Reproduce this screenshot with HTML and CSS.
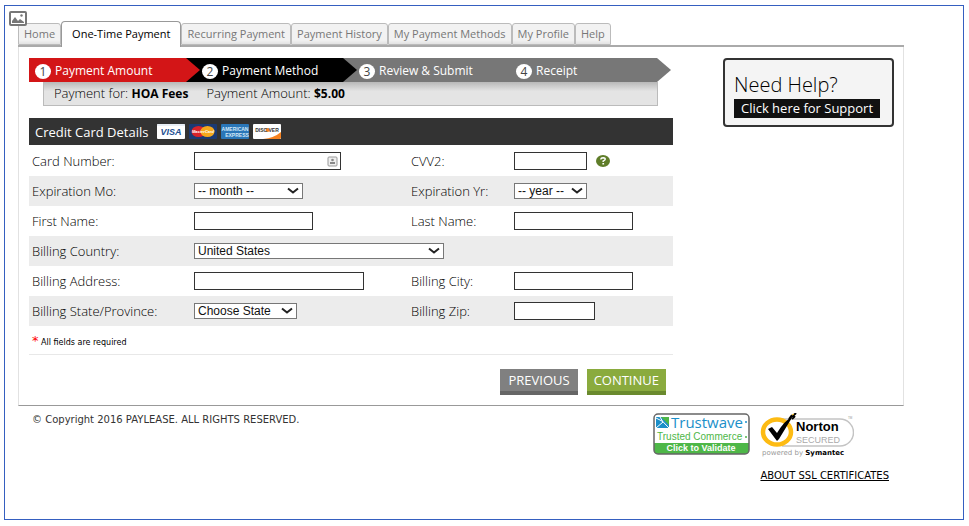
FILE: index.html
```html
<!DOCTYPE html>
<html lang="en">
    <head>
        <meta charset="UTF-8">
        <title>One-Time Payment</title>
        <link rel="stylesheet" href="styles.css">
    </head>
    <body>
        <div class="page">
            <svg class="logo" width="18" height="15" viewBox="0 0 18 15">
                <rect x="1" y="1" width="16" height="13" rx="1" fill="#fff" stroke="#777" stroke-width="2"/>
                <path d="M3 12v-2l3-4 3 4 2-2 4 3v1z" fill="#777"/>
                <circle cx="12.500" cy="4.500" r="1.200" fill="#777"/>
            </svg>

            <nav class="tabs">
                <a href="#">Home</a>
                <a href="#" class="current">One-Time Payment</a>
                <a href="#">Recurring Payment</a>
                <a href="#">Payment History</a>
                <a href="#">My Payment Methods</a>
                <a href="#">My Profile</a>
                <a href="#">Help</a>
            </nav>

            <div class="panel">
                <div class="main">
                    <ol class="steps">
                        <li class="done"><span class="num">1</span>Payment Amount</li>
                        <li class="active"><span class="num">2</span>Payment Method</li>
                        <li><span class="num">3</span>Review &amp; Submit</li>
                        <li><span class="num">4</span>Receipt</li>
                    </ol>
                    <div class="summary">
                        <span>Payment for: <b>HOA Fees</b></span>
                        <span>Payment Amount: <b>$5.00</b></span>
                    </div>

                    <form action="#" method="post">
                        <div class="card_head">
                            <h2>Credit Card Details</h2>
                            <svg width="28" height="15" viewBox="0 0 28 15">
                                <rect width="28" height="15" rx="1" fill="#fff"/>
                                <path d="M1 0h26l1 1v1H0V1z" fill="#e8eef5"/>
                                <text x="14" y="11" class="visa">VISA</text>
                            </svg>
                            <svg width="28" height="15" viewBox="0 0 28 15">
                                <rect width="28" height="15" rx="1" fill="#1b3a74"/>
                                <ellipse cx="9.500" cy="7.500" rx="7" ry="5.500" fill="#d8232a"/>
                                <ellipse cx="18.500" cy="7.500" rx="7" ry="5.500" fill="#f5a81c"/>
                                <text x="14" y="9" class="mastercard">MasterCard</text>
                            </svg>
                            <svg width="28" height="15" viewBox="0 0 28 15">
                                <rect width="28" height="15" rx="1" fill="#2a76b8"/>
                                <text x="14" y="7" class="amex">AMERICAN</text>
                                <text x="16" y="13" class="amex">EXPRESS</text>
                            </svg>
                            <svg width="28" height="15" viewBox="0 0 28 15">
                                <rect width="28" height="15" rx="1" fill="#fff"/>
                                <path d="M28 8v6l-1 1H10q11-1 18-7z" fill="#f58220"/>
                                <circle cx="14.500" cy="6" r="2" fill="#f58220"/>
                                <text x="14" y="8" class="discover">DISC VER</text>
                            </svg>
                        </div>

                        <div class="row">
                            <label for="card">Card Number:</label>
                            <div class="card_box">
                                <input type="text" id="card" class="w_card">
                                <svg class="fill_icon" width="11" height="11" viewBox="0 0 11 11">
                                    <rect x="1" y="1" width="9" height="9" rx="1" fill="#eee" stroke="#999"/>
                                    <circle cx="5.500" cy="4" r="1.300" fill="#888"/>
                                    <path d="M3 8V6h5v2z" fill="#888"/>
                                </svg>
                            </div>
                            <label for="cvv">CVV2:</label>
                            <div class="cvv_box">
                                <input type="text" id="cvv" class="w_cvv">
                                <svg width="14" height="12" viewBox="0 0 14 12">
                                    <ellipse cx="7" cy="6" rx="7" ry="6" fill="#5f7d29"/>
                                    <path d="M4.800 4.500Q5 2.700 7.200 2.700Q9.300 2.800 9.200 4.300Q9.100 5.300 7.200 6.100V7" fill="none" stroke="#fff" stroke-width="1.500"/>
                                    <rect x="6.400" y="8" width="1.700" height="1.500" fill="#fff"/>
                                </svg>
                            </div>
                        </div>
                        <div class="row">
                            <label for="month">Expiration Mo:</label>
                            <div><select id="month" class="w_month"><option>-- month --</option></select></div>
                            <label for="year">Expiration Yr:</label>
                            <div><select id="year" class="w_cvv"><option>-- year --</option></select></div>
                        </div>
                        <div class="row">
                            <label for="first">First Name:</label>
                            <div><input type="text" id="first" class="w_name"></div>
                            <label for="last">Last Name:</label>
                            <div><input type="text" id="last" class="w_name"></div>
                        </div>
                        <div class="row">
                            <label for="country">Billing Country:</label>
                            <div class="wide"><select id="country" class="w_country"><option>United States</option></select></div>
                        </div>
                        <div class="row">
                            <label for="address">Billing Address:</label>
                            <div><input type="text" id="address" class="w_address"></div>
                            <label for="city">Billing City:</label>
                            <div><input type="text" id="city" class="w_name"></div>
                        </div>
                        <div class="row">
                            <label for="state">Billing State/Province:</label>
                            <div><select id="state" class="w_state"><option>Choose State</option></select></div>
                            <label for="zip">Billing Zip:</label>
                            <div><input type="text" id="zip" class="w_zip"></div>
                        </div>
                        <p class="required"><span class="star">*</span> All fields are required</p>

                        <div class="buttons">
                            <button type="button">PREVIOUS</button>
                            <button type="submit" class="go">CONTINUE</button>
                        </div>
                    </form>
                </div>

                <div class="help">
                    <h3>Need Help?</h3>
                    <a href="#">Click here for Support</a>
                </div>
            </div>

            <div class="footer">
                <p>© Copyright 2016 PAYLEASE. ALL RIGHTS RESERVED.</p>
                <svg class="trustwave" width="97" height="42" viewBox="0 0 97 42">
                    <rect x="1" y="1" width="95" height="40" rx="4" fill="#fff"/>
                    <path d="M1 30h95v7q0 4-4 4H5q-4 0-4-4z" fill="#4eb748"/>
                    <rect x="1" y="1" width="95" height="40" rx="4" fill="none" stroke="#666" stroke-width="1.500"/>
                    <path d="M3 4h13v11H3z" fill="#1b8fc9"/>
                    <path d="M8 4h8v8z" fill="#4eb748"/>
                    <path d="M3 5q7 2 13 10M3 15l7-6M7 4l3 5" fill="none" stroke="#fff" stroke-width="1"/>
                    <text x="18" y="15" class="tw_name">Trustwave</text>
                    <circle cx="93" cy="9" r="1" fill="#1b8fc9"/>
                    <text x="4" y="27" class="tw_sub">Trusted Commerce</text>
                    <circle cx="93" cy="24" r="1" fill="#4eb748"/>
                    <text x="48" y="38" class="tw_click">Click to Validate</text>
                </svg>
                <div class="norton_box">
                    <svg width="94" height="44" viewBox="0 0 94 44">
                        <path d="M22 6h58a13 13 0 0 1 0 27H22" fill="#fff" stroke="#c4c4c4" stroke-width="1.500"/>
                        <ellipse cx="17" cy="19" rx="14" ry="12.500" fill="#fff" stroke="#fdbb13" stroke-width="4.500"/>
                        <path d="M8 16l4-2 5 6Q24 8 33 3L19 26l-2 2z" fill="#000"/>
                        <path d="M29 6l3-4M32 4l4-4M32 6l3-3" stroke="#000" stroke-width="2"/>
                        <path d="M32 2l2-1" stroke="#fdbb13" stroke-width="1"/>
                        <text x="36" y="18" class="nt_name">Norton</text>
                        <text x="36" y="30" class="nt_sub">SECURED</text>
                        <text x="88" y="6" class="nt_tm">TM</text>
                        <text x="2" y="42" class="nt_by">powered by <tspan class="nt_sym">Symantec</tspan></text>
                    </svg>
                    <a href="#">ABOUT SSL CERTIFICATES</a>
                </div>
            </div>
        </div>
    </body>
</html>
```

FILE: styles.css
```css
* {
    margin: 0;
    padding: 0;
    box-sizing: border-box;
}

body {
    font-family: "Open Sans", "Noto Sans", sans-serif;
    font-size: 12px;
    line-height: 16px;
    color: #333;
    background: #fff;
}

.page {
    min-height: calc(100vh - 11px);
    margin: 5px 5px 0 4px;
    padding: 5px 59px 0 13px;
    border: 1px solid #355fc0;
}

/* the logo hangs over the left edge of the tabs */
.logo {
    display: block;
    position: relative;
    left: -9px;
    z-index: 2;
}

/* tabs */
.tabs {
    display: flex;
    align-items: flex-end;
    margin-top: -5px;
    border-bottom: 2px solid #aaa;
}

.tabs a {
    height: 22px;
    padding: 2px 5px 0;
    border: 1px solid #bbb;
    border-radius: 3px 3px 0 0;
    background: linear-gradient(#f2f2f2 80%, #e2e2e2);
    color: #777;
    font-size: 11px;
    text-decoration: none;
    white-space: nowrap;
}

.tabs .current {
    height: 26px;
    margin-bottom: -2px;
    padding: 4px 10px 0;
    border-color: #999;
    border-bottom: none;
    border-radius: 4px 4px 0 0;
    background: #fff;
    color: #000;
}

/* panel */
.panel {
    display: flex;
    align-items: flex-start;
    gap: 50px;
    padding: 11px 9px 10px 10px;
    border: 1px solid #e2e2e2;
    border-top: none;
    border-bottom-color: #999;
}

.main {
    flex: 1;
}

/* steps */
.steps {
    display: flex;
    margin-right: 2px;
    list-style: none;
    background: #777;
    color: #fff;
    clip-path: polygon(0 0, calc(100% - 14px) 0, 100% 50%, calc(100% - 14px) 100%, 0 100%);
}

.steps li {
    flex: 1 1 25%;
    display: flex;
    align-items: center;
    gap: 4px;
    height: 24px;
    margin-left: -14px;
    padding: 2px 0 0 16px;
    white-space: nowrap;
}

.steps .done,
.steps .active {
    clip-path: polygon(0 0, calc(100% - 14px) 0, 100% 50%, calc(100% - 14px) 100%, 0 100%);
}

/* the first step lies over the second, so that its tip shows */
.steps .done {
    z-index: 1;
    margin-left: 0;
    padding-left: 6px;
    background: #d31517;
}

.steps .active {
    background: #000;
}

.num {
    width: 16px;
    height: 15px;
    border-radius: 50%;
    background: #fff;
    color: #444;
    line-height: 15px;
    text-align: center;
}

.summary {
    display: flex;
    gap: 18px;
    height: 24px;
    margin: 0 15px 12px 14px;
    padding: 3px 10px 0;
    border: 1px solid #bbb;
    border-top: none;
    background: linear-gradient(#b8b8b8, #e4e4e4 40%);
    color: #000;
    font-size: 13px;
    font-weight: 300;
}

.summary b {
    font-size: 12px;
    font-weight: 700;
}

/* form */
.card_head {
    display: flex;
    align-items: center;
    gap: 4px;
    height: 27px;
    margin-bottom: 1px;
    padding-left: 6px;
    background: #333;
}

.card_head h2 {
    margin-right: 5px;
    color: #fff;
    font-size: 13px;
    font-weight: normal;
}

.card_head text {
    font-family: "Liberation Sans", Arial, sans-serif;
    font-weight: bold;
    text-anchor: middle;
}

.card_head .visa {
    fill: #1d4f91;
    font-size: 9px;
    font-style: italic;
}

.card_head .mastercard {
    fill: #fff;
    font-size: 4px;
    font-style: italic;
}

.card_head .amex {
    fill: #d5e8f7;
    font-size: 5px;
}

.card_head .discover {
    fill: #333;
    font-size: 5px;
}

.row {
    display: grid;
    grid-template-columns: 162fr 217fr 103fr 159fr;
    align-items: center;
    height: 30px;
    padding-left: 3px;
}

.row:nth-child(odd) {
    background: #ececec;
}

.row label {
    color: #000;
    font-size: 13px;
    font-weight: 300;
}

.row > div {
    display: flex;
    align-items: center;
}

.row .wide {
    grid-column: 2 / 5;
}

input,
select {
    height: 18px;
    border: 1px solid #333;
    background: #fff;
    font-family: "Liberation Sans", Arial, sans-serif;
    font-size: 12px;
}

select {
    height: 16px;
    padding: 0 18px 0 3px;
    border-color: #777;
    border-radius: 0;
    appearance: none;
    color: #111;
    background: #fff url("data:image/svg+xml,%3Csvg xmlns='http://www.w3.org/2000/svg' width='12' height='8'%3E%3Cpath d='M1 1.500l5 4 5-4' fill='none' stroke='%23222' stroke-width='2'/%3E%3C/svg%3E") no-repeat right 3px center;
}

.w_card {
    width: 147px;
}

.w_cvv {
    width: 73px;
}

.w_month {
    width: 109px;
}

.w_name {
    width: 119px;
}

.w_country {
    width: 250px;
}

.w_address {
    width: 170px;
}

.w_state {
    width: 103px;
}

.w_zip {
    width: 81px;
}

.card_box {
    position: relative;
}

.fill_icon {
    position: absolute;
    left: 133px;
}

.cvv_box {
    gap: 9px;
}

.required {
    height: 29px;
    padding: 7px 0 0 3px;
    border-bottom: 1px solid #e8e8e8;
    color: #000;
    font-family: "DejaVu Sans", Verdana, sans-serif;
    font-size: 8px;
}

.star {
    color: red;
    font-size: 13px;
}

.buttons {
    display: flex;
    justify-content: flex-end;
    gap: 9px;
    padding: 14px 7px 0 0;
}

button {
    height: 26px;
    padding: 0 8px;
    border: none;
    border-bottom: 4px solid #666;
    background: #808080;
    color: #fff;
    font-family: inherit;
    font-size: 13px;
}

.go {
    padding: 0 7px;
    border-bottom-color: #6a8a2e;
    background: #8aab3e;
}

.help {
    width: 171px;
    padding: 11px 12px 7px 9px;
    border: 2px solid #333;
    border-radius: 4px;
    background: #f4f4f4;
}

.help h3 {
    margin-bottom: 1px;
    color: #000;
    font-size: 20px;
    font-weight: 300;
    line-height: 27px;
}

.help a {
    display: block;
    background: #111;
    color: #fff;
    font-size: 13px;
    line-height: 19px;
    text-align: center;
    text-decoration: none;
    white-space: nowrap;
}

/* footer */
.footer {
    display: flex;
    align-items: flex-start;
    gap: 10px;
    padding: 7px 15px 0 14px;
    font-family: "DejaVu Sans", Verdana, sans-serif;
    font-size: 10px;
    line-height: 14px;
}

.footer p {
    flex: 1;
}

.norton_box a {
    display: block;
    margin-top: 12px;
    color: #000;
    white-space: nowrap;
}

.norton_box svg {
    display: block;
}

.footer text {
    font-family: "Liberation Sans", Arial, sans-serif;
}

.footer .tw_name {
    fill: #1b8fc9;
    font-family: "Open Sans", sans-serif;
    font-size: 15px;
}

.footer .tw_sub {
    fill: #4eb748;
    font-size: 10px;
}

.footer .tw_click {
    fill: #fff;
    font-size: 9px;
    font-weight: bold;
    text-anchor: middle;
}

.footer .nt_name {
    fill: #000;
    font-size: 13px;
    font-weight: bold;
}

.footer .nt_sub {
    fill: #aaa;
    font-size: 9px;
}

.footer .nt_tm {
    fill: #999;
    font-size: 3px;
}

.footer .nt_by {
    fill: #999;
    font-family: "DejaVu Sans", Verdana, sans-serif;
    font-size: 7px;
}

.footer .nt_sym {
    fill: #000;
    font-weight: bold;
}
```
